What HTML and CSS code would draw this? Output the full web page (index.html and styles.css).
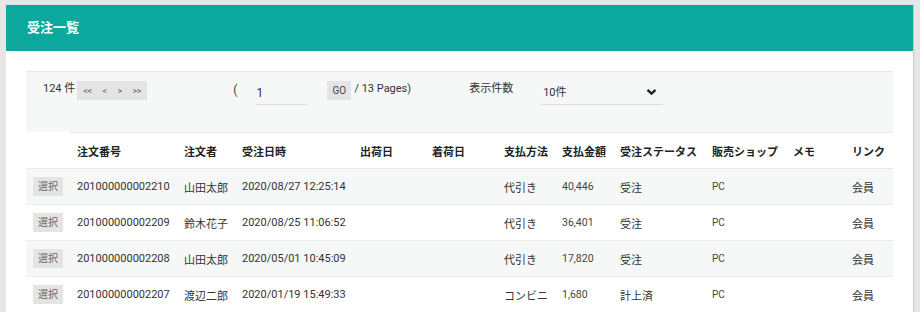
FILE: index.html
```html
<!DOCTYPE html>
<html lang="ja">
<head>
<meta charset="utf-8">
<title>受注一覧</title>
<link rel="stylesheet" href="styles.css">
</head>
<body>
<div class="card">
  <div class="card-head"><h1 class="title">受注一覧</h1></div>
  <div class="card-body">
    <div class="pager">
      <span class="count">124 件</span>
      <span class="nav">
        <span class="nav-btn">&lt;&lt;</span><span class="nav-btn">&lt;</span><span class="nav-btn">&gt;</span><span class="nav-btn">&gt;&gt;</span>
      </span>
      <span class="paren">(</span>
      <span class="page-input">1</span>
      <span class="go">GO</span>
      <span class="pages">/ 13 Pages)</span>
      <span class="per-label">表示件数</span>
      <span class="select">10件
        <svg class="chev" width="11" height="8" viewBox="0 0 11 8"><polyline points="1.5,1.8 5.5,5.6 9.5,1.8" fill="none" stroke="#222" stroke-width="2.4"/></svg>
      </span>
    </div>
    <table class="orders">
      <colgroup>
        <col style="width:44px"><col style="width:107px"><col style="width:58px"><col style="width:118px"><col style="width:72px"><col style="width:72px"><col style="width:58px"><col style="width:58px"><col style="width:92px"><col style="width:81px"><col style="width:59px"><col style="width:48px">
      </colgroup>
      <thead>
        <tr>
          <th class="sel-col"></th><th>注文番号</th><th>注文者</th><th>受注日時</th><th>出荷日</th><th>着荷日</th><th>支払方法</th><th>支払金額</th><th>受注ステータス</th><th>販売ショップ</th><th>メモ</th><th>リンク</th>
        </tr>
      </thead>
      <tbody>
        <tr class="odd">
          <td><span class="sel-btn">選択</span></td><td>201000000002210</td><td>山田太郎</td><td>2020/08/27 12:25:14</td><td></td><td></td><td>代引き</td><td class="amt">40,446</td><td>受注</td><td class="shop">PC</td><td></td><td>会員</td>
        </tr>
        <tr>
          <td><span class="sel-btn">選択</span></td><td>201000000002209</td><td>鈴木花子</td><td>2020/08/25 11:06:52</td><td></td><td></td><td>代引き</td><td class="amt">36,401</td><td>受注</td><td class="shop">PC</td><td></td><td>会員</td>
        </tr>
        <tr class="odd">
          <td><span class="sel-btn">選択</span></td><td>201000000002208</td><td>山田太郎</td><td>2020/05/01 10:45:09</td><td></td><td></td><td>代引き</td><td class="amt">17,820</td><td>受注</td><td class="shop">PC</td><td></td><td>会員</td>
        </tr>
        <tr>
          <td><span class="sel-btn">選択</span></td><td>201000000002207</td><td>渡辺二郎</td><td>2020/01/19 15:49:33</td><td></td><td></td><td>コンビニ</td><td class="amt">1,680</td><td>計上済</td><td class="shop">PC</td><td></td><td>会員</td>
        </tr>
      </tbody>
    </table>
  </div>
</div>
</body>
</html>
```

FILE: styles.css
```css
* { box-sizing: border-box; }
html, body { margin: 0; padding: 0; }
body {
  background: #e6e6e6;
  font-family: Roboto, "Noto Sans CJK JP", sans-serif;
  font-size: 11px;
  color: #333;
  overflow: hidden;
}
.card {
  margin: 5px 0 0 6px;
  width: 907px;
  min-height: 320px;
  background: #fff;
  box-shadow: 1px 0 1px rgba(0,0,0,0.12);
}
.card-head {
  height: 46px;
  background: #0ca89e;
  display: flex;
  align-items: center;
  padding-left: 21px;
}
.title {
  margin: 0;
  color: #fff;
  font-size: 13px;
  font-weight: 700;
  line-height: 16px;
}
.card-body {
  padding: 20px 20px 0 20px;
}
.pager {
  height: 61px;
  border-top: 1px solid #e8eaea;
  background: #f6f7f7;
  display: flex;
  align-items: flex-start;
  padding: 9px 0 0 17px;
  color: #333;
}
.count { line-height: 16px; }
.nav {
  margin-left: 2px;
  width: 70px;
  height: 19px;
  background: #e4e4e4;
  display: flex;
  align-items: center;
  justify-content: space-between;
  padding: 0 6px;
  font-size: 9px;
  color: #666;
  letter-spacing: -0.3px;
}
.paren {
  margin-left: 86px;
  line-height: 19px;
  font-size: 12px;
  color: #444;
}
.page-input {
  margin-left: 19px;
  width: 51px;
  height: 24px;
  border-bottom: 1px solid #dcdcdc;
  padding-top: 4px;
  line-height: 16px;
  font-size: 12px;
}
.go {
  margin-left: 20px;
  width: 24px;
  height: 19px;
  background: #e4e4e4;
  text-align: center;
  line-height: 19px;
  font-size: 10px;
  color: #444;
}
.pages {
  margin-left: 3px;
  line-height: 16px;
}
.per-label {
  margin-left: 58px;
  line-height: 16px;
}
.select {
  margin-left: 28px;
  width: 122px;
  height: 24px;
  border-bottom: 1px solid #dcdcdc;
  padding: 4px 0 0 2px;
  line-height: 16px;
  font-size: 11px;
  display: flex;
  align-items: flex-start;
  justify-content: space-between;
}
.chev { margin: 3px 6px 0 0; }
.orders {
  width: 867px;
  table-layout: fixed;
  border-collapse: collapse;
}
.orders th, .orders td {
  padding: 0 0 0 7px;
  text-align: left;
  white-space: nowrap;
  overflow: hidden;
}
.orders th {
  height: 36px;
  font-weight: 700;
  font-size: 11px;
  color: #222;
  border-top: 1px solid #e8eaea;
  border-bottom: 1px solid #e8eaea;
}
.orders th.sel-col { border-top-color: #fff; }
.orders td {
  height: 36px;
  border-bottom: 1px solid #eaecec;
  color: #333;
}
.orders tr.odd td { background: #f6f7f7; }
.orders td.amt { color: #444; font-size: 10.5px; }
.orders td.shop { font-size: 10px; color: #444; }
.sel-btn {
  display: inline-block;
  width: 30px;
  height: 19px;
  background: #e4e4e4;
  color: #666;
  font-size: 10px;
  line-height: 19px;
  text-align: center;
}
```
